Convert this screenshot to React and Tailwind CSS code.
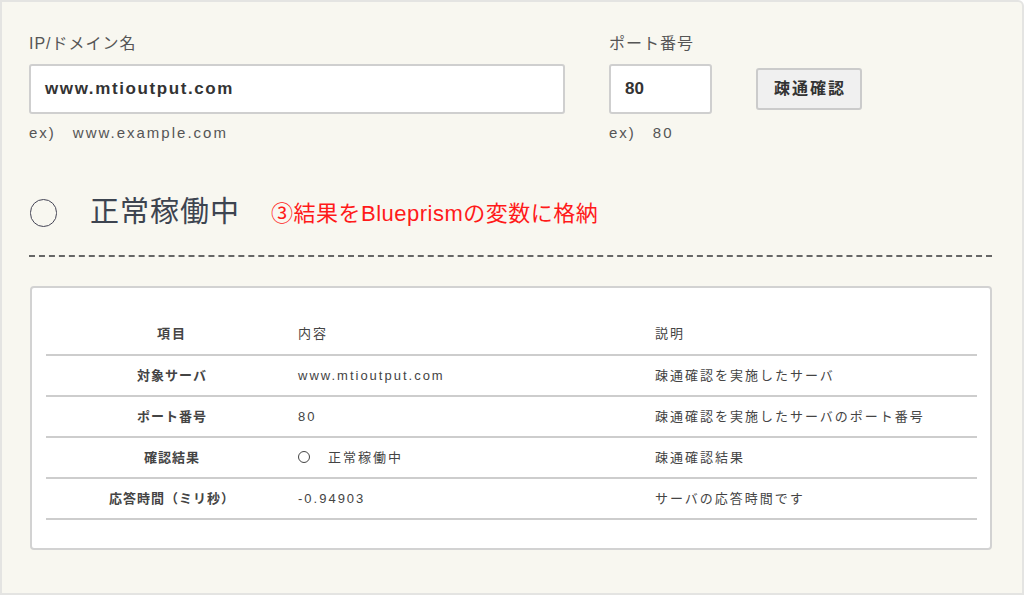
const ROWS = [
  { label: '対象サーバ', value: 'www.mtioutput.com', desc: '疎通確認を実施したサーバ' },
  { label: 'ポート番号', value: '80', desc: '疎通確認を実施したサーバのポート番号' },
  { label: '確認結果', value: '正常稼働中', ok: true, desc: '疎通確認結果' },
  { label: '応答時間（ミリ秒）', value: '-0.94903', desc: 'サーバの応答時間です' },
]

export default function App() {
  return (
    <div
      className="w-[1024px] h-[595px] bg-[#f8f7f0] border-2 border-[#e4e4e2] rounded-tr-[6px] text-[#444]"
      style={{ fontFamily: '"Liberation Sans", "Noto Sans CJK JP", sans-serif' }}
    >
      {/* フォーム */}
      <div className="flex pl-[27px] pt-[31px]">
        <div className="w-[536px]">
          <div className="text-[16px] leading-[22px] tracking-[1px] text-[#555]">IP/ドメイン名</div>
          <div className="mt-[9px] h-[50px] bg-white border-2 border-[#cfcfcf] rounded-[3px] flex items-center px-[14px] text-[17px] font-bold tracking-[1.6px] text-[#333]">
            www.mtioutput.com
          </div>
          <div className="mt-[8px] text-[15px] leading-[22px] tracking-[2px] text-[#555]">
            ex)<span className="ml-[17px]">www.example.com</span>
          </div>
        </div>

        <div className="ml-[44px] w-[103px]">
          <div className="text-[16px] leading-[22px] tracking-[1px] text-[#555]">ポート番号</div>
          <div className="mt-[9px] h-[50px] bg-white border-2 border-[#cfcfcf] rounded-[3px] flex items-center px-[14px] text-[17px] font-bold text-[#333]">
            80
          </div>
          <div className="mt-[8px] text-[15px] leading-[22px] tracking-[2px] text-[#555]">
            ex)<span className="ml-[17px]">80</span>
          </div>
        </div>

        <div className="ml-[44px] pt-[35px]">
          <button className="w-[106px] h-[42px] bg-[#f0f0f0] border-2 border-[#cbcbcb] rounded-[3px] text-[16px] font-bold text-[#333] tracking-[2px] pl-[2px]">
            疎通確認
          </button>
        </div>
      </div>

      {/* ステータス */}
      <div className="flex items-center pl-[28px] mt-[49px] h-[40px]">
        <span className="w-[27px] h-[28px] rounded-full border-[1.5px] border-[#445]" />
        <span className="ml-[33px] text-[29px] tracking-[1px] text-[#3d4450]">正常稼働中</span>
        <span className="ml-[31px] text-[22px] tracking-[0.5px] text-[#ff1a1a]">③結果をBlueprismの変数に格納</span>
      </div>

      <div className="ml-[27px] mr-[30px] mt-[22px] border-t-2 border-dashed border-[#666]" />

      {/* 結果テーブル */}
      <div className="ml-[28px] mr-[30px] mt-[29px] h-[264px] bg-white border-2 border-[#d2d2d2] rounded-[4px] pl-[14px] pr-[13px] pt-[26px]">
        <table className="w-full border-collapse text-[13px] tracking-[2px] text-[#444]">
          <thead>
            <tr className="h-[41px] border-b-2 border-[#cdcdcd]">
              <th className="w-[252px] text-center font-bold">項目</th>
              <th className="w-[357px] text-left font-normal">内容</th>
              <th className="text-left font-normal">説明</th>
            </tr>
          </thead>
          <tbody>
            {ROWS.map((r) => (
              <tr key={r.label} className="h-[41px] border-b-2 border-[#cdcdcd]">
                <td className="text-center font-bold tracking-[1px]">{r.label}</td>
                <td>
                  {r.ok && (
                    <span className="inline-block align-[-1px] w-[12px] h-[12px] mr-[18px] rounded-full border border-[#444]" />
                  )}
                  {r.value}
                </td>
                <td>{r.desc}</td>
              </tr>
            ))}
          </tbody>
        </table>
      </div>
    </div>
  )
}
